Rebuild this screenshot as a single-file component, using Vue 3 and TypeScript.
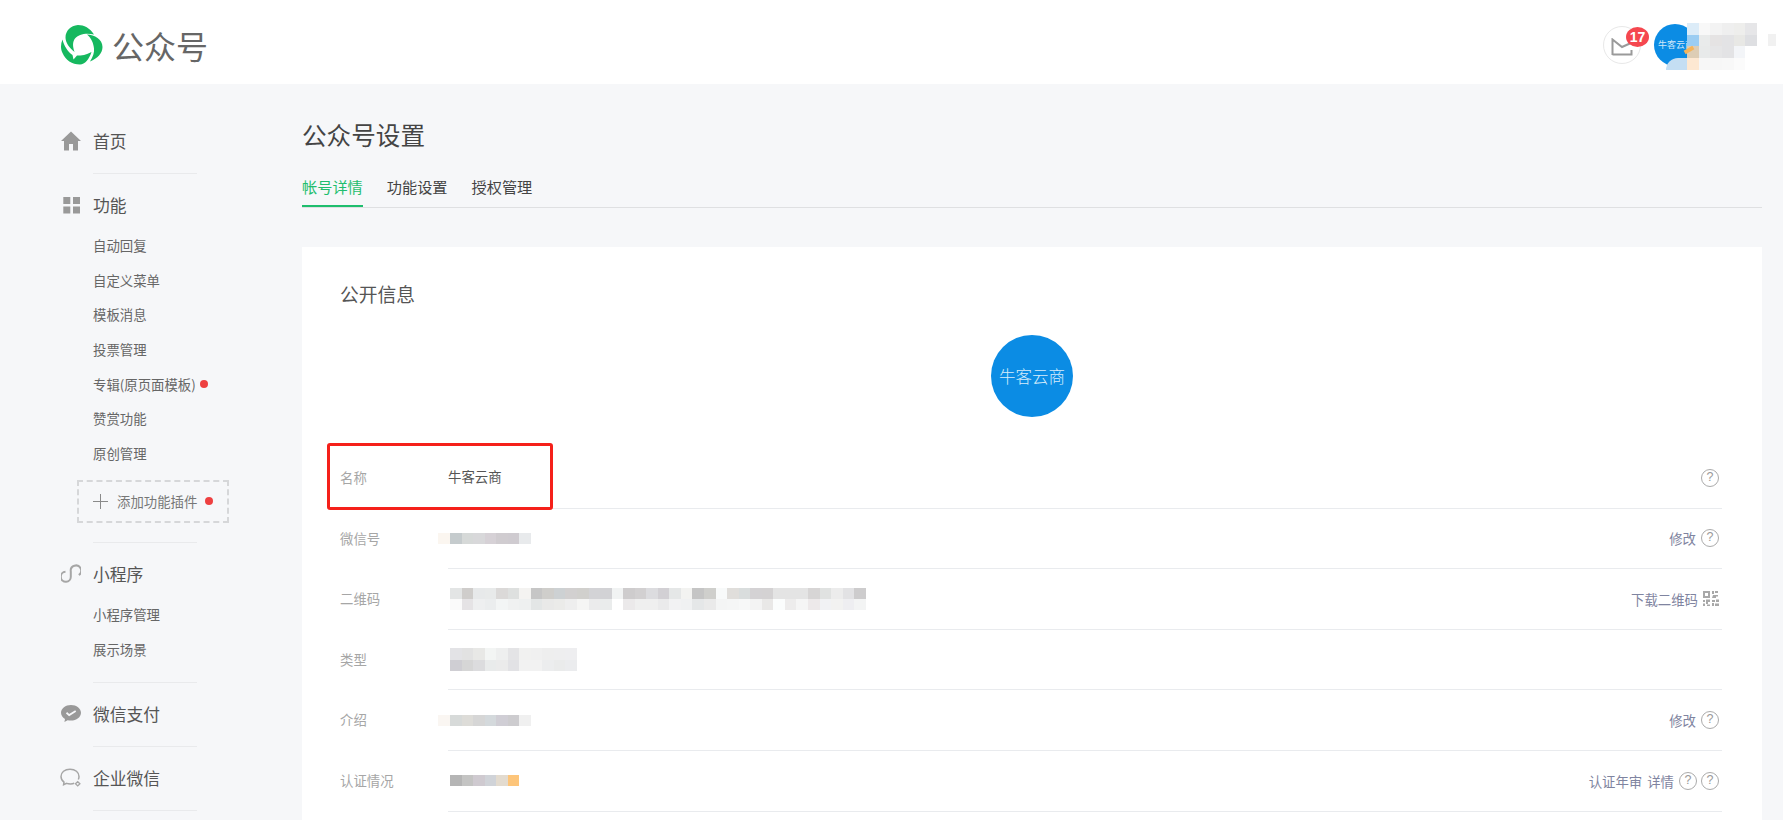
<script setup lang="ts">
interface SubItem { text: string; dot?: boolean }
interface Mosaic { lead?: string; rows: string[][] }
interface Action { text: string }
interface Row {
  label: string
  value?: string
  mosaic?: Mosaic
  actions?: Action[]
  help: number
  qr?: boolean
}

const split = (s: string): string[] => s.split(' ').map((c) => '#' + c)

const featureItems: SubItem[] = [
  { text: '自动回复' },
  { text: '自定义菜单' },
  { text: '模板消息' },
  { text: '投票管理' },
  { text: '专辑(原页面模板)', dot: true },
  { text: '赞赏功能' },
  { text: '原创管理' },
]
const miniItems: SubItem[] = [{ text: '小程序管理' }, { text: '展示场景' }]

const rows: Row[] = [
  { label: '名称', value: '牛客云商', help: 1 },
  {
    label: '微信号',
    mosaic: { lead: '#fbf6f0', rows: [split('c5cbcd d6d9d8 d8d8da d6d1d6 d0ccd0 cfcbd0 e8eaec')] },
    actions: [{ text: '修改' }],
    help: 1,
  },
  {
    label: '二维码',
    mosaic: {
      rows: [
        split('e3e5e5 cfcdcb e7e9ea e8eaea dbd9d8 dee0df f4f3f1 c6c6c6 cfcecb cdd1d3 d2d0d0 d1d0cd d3d3d6 d2d2d5 f1f3f3 cecccd d2d0d1 dcdcdf d2d0d4 e5e7e7 f3f3f1 c5c5c5 cfcfcc f8fafa e0dedb d9dddd d4d2d4 d4d2d3 e4e4e4 e4e4e4 e4e4e4 d7d5d5 e0e2e1 ececec e2e2e4 cdcccd'),
        split('fafafa e5e3e5 eeeff0 ebedee f3f5f5 f0f1f1 eef0f0 e3e6e6 e9e9e8 ebebe9 eeeeee f5f5f4 ebebec eaecec ffffff ebe9ea efefef efefef eaeaeb f2f2f3 f0f1f2 e5e7e8 eaeaea f4f5f5 f5f6f6 f7f8f8 f3f3f3 e9e8e7 fbfdfd edecec f5f5f5 ede9ea f1f2f4 f2f2f1 eeeef1 f3f4f4'),
      ],
    },
    actions: [{ text: '下载二维码' }],
    help: 0,
    qr: true,
  },
  {
    label: '类型',
    mosaic: {
      rows: [
        split('e3e3e6 e2e2e2 e8e8e6 f3f5f4 eeefef e4e4e6 f1f1f0 f0f0f0 eeeeee eeeeef eeeef0'),
        split('cfced3 d6d6d6 dcdcde e9ebeb ebebeb e2e2e5 f2f2f2 f2f2f2 ecedee eaebeb ebecee'),
      ],
    },
    help: 0,
  },
  {
    label: '介绍',
    mosaic: { lead: '#faf6f2', rows: [split('d7dad9 dddcd8 d6d6d6 d4d9dc d0ced5 cdcccf f0f0f0')] },
    actions: [{ text: '修改' }],
    help: 1,
  },
  {
    label: '认证情况',
    mosaic: { rows: [split('b5b5b5 c4c4c3 cfcad0 d0d3d8 e3dbcf fdc57a')] },
    actions: [{ text: '认证年审' }, { text: '详情' }],
    help: 2,
  },
]

const profileMosaic: string[][] = [
  split('ffffff f8f8f8 f3f3f3 efefef eeeeec e6e6e8'),
  split('9bcdf2 e9ebeb e5e3e3 e3e3e5 e8e8e5 dedfe2'),
  split('ddcdb5 e8eaea e6e6e7 e3e3e5 f3f5f8 ffffff'),
  split('fde8d2 f7f7f7 f7f7f7 f8f8f8 fbfbfb ffffff'),
]
</script>

<template>
  <div class="page">
    <header class="topbar">
      <div class="brand">
        <svg class="logo" viewBox="0 0 42 40" width="42" height="40">
          <path fill="#16b85f" d="M33 9.500C29 3 23 0 17 0 9.500.5 4.500 6 4.500 12.500c0 5 3.500 10 9 14.500-2-6-2-10 .5-13.500 3.500-4.500 11.500-6 19-4Z" />
          <path fill="#16b85f" d="M26 9.500C33.500 10 41.500 14 41.500 22c0 6-5 11.500-12.500 14.500 3-5 4.500-9 4-13-.5-5-2.500-10.500-7-14Z" />
          <path fill="#16b85f" d="M1.500 14.500C-.5 19-.5 24 1.500 28 4.500 35 11 39.500 19 39.500c5 0 9-5 11.500-12.500-5 3-10 3.500-14.500 3.500L12.500 34.500l-1-4.500C7 27 3 21 1.500 14.500Z" />
        </svg>
        <span class="brand-name">公众号</span>
      </div>
      <div class="top-right">
        <div class="mail">
          <svg viewBox="0 0 22 18" width="22" height="18" fill="none" stroke="#9a9a9a" stroke-width="2">
            <path d="M1.500 17V1.500L11 9l9-4M1.500 16.500h19V12" />
          </svg>
          <span class="badge">17</span>
        </div>
        <div class="user">
          <div class="user-avatar">牛客云商</div>
          <div class="user-blob"></div>
          <div class="user-mosaic">
            <div v-for="(row, r) in profileMosaic" :key="r" class="um-row">
              <i v-for="(c, k) in row" :key="k" :style="{ background: c }"></i>
            </div>
          </div>
          <i class="user-tip"></i>
          <i class="user-far"></i>
        </div>
      </div>
    </header>

    <div class="shell">
      <aside class="side">
        <a class="nav-main">
          <svg class="nav-ico" viewBox="0 0 20 20" width="20" height="20">
            <path fill="#999" d="M10 .5 0 10h3v9.500h5V13h4v6.500h5V10h3L10 .5Z" />
          </svg>
          首页
        </a>
        <div class="divider"></div>

        <a class="nav-main">
          <svg class="nav-ico" viewBox="0 0 20 20" width="20" height="20">
            <path fill="#999" d="M2.300 2h7v7h-7zM12 2h7v7h-7zM2.300 11.500h7v7h-7zM12 11.500h7v7h-7z" />
          </svg>
          功能
        </a>
        <ul class="subs">
          <li v-for="it in featureItems" :key="it.text">
            {{ it.text }}<i v-if="it.dot" class="dot"></i>
          </li>
        </ul>
        <div class="add-box">
          <svg viewBox="0 0 15 15" width="15" height="15" fill="none" stroke="#8a8a8a" stroke-width="1">
            <path d="M7.500 0v15M0 7.500h15" />
          </svg>
          <span>添加功能插件</span>
          <i class="dot"></i>
        </div>
        <div class="divider divider-add"></div>

        <a class="nav-main">
          <svg class="nav-ico" viewBox="0 0 20 20" width="20" height="20" fill="none" stroke="#a6a6a6" stroke-width="2">
            <path d="M17.800 11A5.200 5.200 0 1 0 9.800 7.500v5A5 5 0 1 1 4.500 7.800" />
          </svg>
          小程序
        </a>
        <ul class="subs">
          <li v-for="it in miniItems" :key="it.text">{{ it.text }}</li>
        </ul>
        <div class="divider divider-mini"></div>

        <a class="nav-main">
          <svg class="nav-ico" viewBox="0 0 20 20" width="20" height="20">
            <path fill="#999" d="M10 1C4.500 1 0 4.400 0 8.800c0 2.600 1.600 4.800 4 6.200l-.6 3 3.200-1.800c1.100.3 2.200.4 3.400.4 5.500 0 10-3.400 10-7.800S15.500 1 10 1Z" />
            <path fill="none" stroke="#f6f7f9" stroke-width="1.800" d="M5.500 8.800l2.700 2.300 6.500-4" />
          </svg>
          微信支付
        </a>
        <div class="divider"></div>

        <a class="nav-main">
          <svg class="nav-ico ico-wide" viewBox="0 0 22 20" width="22" height="20" fill="none" stroke="#a6a6a6" stroke-width="1.500">
            <path d="M18.300 11.500c.5-1 .7-2 .7-3C19 4.300 15.300 1.200 10 1.200S1 4.300 1 8.500c0 2.400 1.200 4.400 3 5.700l-.4 2.500 3-1.300c1.200.4 2.400.5 3.900.5 1.200 0 2.700-.2 3.700-.6" />
            <path stroke-width="1.300" d="M15.500 15.800l2.200-2.100 2.200 2.100-2.200 2.100z" />
          </svg>
          企业微信
        </a>
        <div class="divider"></div>
      </aside>

      <main class="main">
        <h1 class="title">公众号设置</h1>
        <nav class="tabs">
          <a class="tab active">帐号详情</a>
          <a class="tab">功能设置</a>
          <a class="tab">授权管理</a>
        </nav>

        <section class="card">
          <h2 class="card-title">公开信息</h2>
          <div class="avatar">牛客云商</div>
          <div class="rows">
            <div v-for="(row, i) in rows" :key="row.label" class="row">
              <div v-if="i === 0" class="highlight"></div>
              <div class="label">{{ row.label }}</div>
              <div class="body">
                <div class="value">
                  <span v-if="row.value" class="value-text">{{ row.value }}</span>
                  <div v-else-if="row.mosaic" class="mosaic" :class="{ 'has-lead': row.mosaic.lead }">
                    <div v-for="(cells, r) in row.mosaic.rows" :key="r" class="m-row">
                      <i v-if="row.mosaic.lead" :style="{ background: row.mosaic.lead }"></i>
                      <i v-for="(c, k) in cells" :key="k" :style="{ background: c }"></i>
                    </div>
                  </div>
                </div>
                <div class="actions">
                  <a v-for="a in row.actions" :key="a.text" class="action">{{ a.text }}</a>
                  <svg v-if="row.qr" class="qr" viewBox="0 0 16 15" width="16" height="15" fill="#a8a8a8">
                    <path d="M0 0h7v7H0zM2 2v3h3V2zM9 0h2v3H9zM12 0h3v2h-3zM10 4h5v1.500h-2V7H9zM0 9h2v2H0zM3 8.500h4V11H5v2H3zM0 12.500h2V15H0zM4 13.500h3V15H4zM9 9h3v2H9zM13 8.500h3V11h-3zM9 12h2v3H9zM12 12.500h4V15h-4z" />
                  </svg>
                  <span v-for="n in row.help" :key="n" class="help">?</span>
                </div>
              </div>
            </div>
          </div>
        </section>
      </main>
    </div>
  </div>
</template>

<style>
html, body { margin: 0; background: #fff; overflow: hidden; }
</style>

<style scoped>
.page {
  width: 1783px;
  height: 820px;
  overflow: hidden;
  display: flex;
  flex-direction: column;
  font-family: "Noto Sans CJK SC", "Liberation Sans", sans-serif;
  color: #333;
}
.topbar {
  height: 84px;
  flex: none;
  box-sizing: border-box;
  background: #fff;
  display: flex;
  align-items: center;
  justify-content: space-between;
  padding: 6px 0 0 61px;
}
.brand { display: flex; align-items: center; gap: 9px; }
.logo { display: block; }
.brand-name { font-size: 32px; line-height: 40px; color: #666; }
.top-right { display: flex; align-items: center; gap: 13px; width: 180px; }
.mail {
  position: relative;
  width: 38px;
  height: 38px;
  box-sizing: border-box;
  border: 1px solid #e8e8e8;
  border-radius: 50%;
  display: flex;
  align-items: center;
  justify-content: center;
}
.mail svg { margin-top: 4px; }
.badge {
  position: absolute;
  left: 22px;
  top: 0;
  width: 23px;
  height: 20px;
  border-radius: 50%;
  background: #f5474f;
  color: #fff;
  font: 700 14px/20px "Liberation Sans", sans-serif;
  text-align: center;
}
.user { position: relative; width: 129px; height: 42px; }
.user-avatar {
  width: 42px;
  height: 42px;
  border-radius: 50%;
  background: #0b8ce4;
  color: #cfe8fa;
  font-size: 9px;
  line-height: 42px;
  padding-left: 4px;
  box-sizing: border-box;
  white-space: nowrap;
  overflow: hidden;
}
.user-blob {
  position: absolute;
  left: 12px;
  top: 34px;
  width: 21px;
  height: 12px;
  background: #c4def3;
  border-radius: 12px 0 0 0;
}
.user-mosaic { position: absolute; left: 33px; top: -1px; }
.um-row { display: flex; height: 11.7px; }
.um-row i { display: block; width: 11.7px; height: 100%; }
.um-row:first-child i:first-child { background: #dcecf8 !important; }
.user-tip {
  position: absolute;
  left: 30px;
  top: 24px;
  width: 10px;
  height: 4px;
  background: #f5b45a;
  transform: rotate(-30deg);
}
.user-far {
  position: absolute;
  left: 114px;
  top: 10px;
  width: 8px;
  height: 12px;
  background: #f1f1f1;
}

.shell { flex: 1; min-height: 0; display: flex; background: #f6f7f9; }
.side {
  width: 302px;
  flex: none;
  box-sizing: border-box;
  padding: 40px 0 0 61px;
  font-size: 16.800px;
}
.nav-main {
  display: flex;
  align-items: center;
  height: 34px;
  color: #555;
  line-height: 34px;
  position: relative;
  padding-left: 32px;
}
.nav-ico { position: absolute; left: 0; top: 7px; }
.ico-wide { left: -1px; }
.divider {
  width: 104px;
  height: 1px;
  margin: 15px 0 14px 32px;
  background: #e9eaec;
}
.divider-add { margin-top: 19px; }
.divider-mini { margin-top: 16px; }
.subs { list-style: none; margin: 6px 0 0; padding: 0 0 0 32px; font-size: 13.400px; color: #666; }
.subs li { height: 34.700px; line-height: 34.700px; display: flex; align-items: center; }
.dot { display: block; width: 8px; height: 8px; border-radius: 50%; background: #ee4040; margin-left: 4px; }
.add-box {
  width: 152px;
  height: 43px;
  box-sizing: border-box;
  margin: 9px 0 0 16px;
  border: 2px dashed #d6d7d9;
  padding-left: 14px;
  display: flex;
  align-items: center;
  font-size: 13.400px;
  color: #777;
}
.add-box span { margin-left: 9px; }
.add-box .dot { margin-left: 8px; }

.main { width: 1460px; flex: none; padding-top: 32px; display: flex; flex-direction: column; }
.title { margin: 0; font-size: 24.600px; font-weight: 400; line-height: 36px; color: #444; }
.tabs { display: flex; gap: 24px; margin-top: 23px; border-bottom: 1px solid #dfe0e2; height: 32px; }
.tab { font-size: 15.200px; line-height: 22px; height: 32px; box-sizing: border-box; color: #444; }
.active { color: #1fbe6e; border-bottom: 2px solid #1fbe6e; }
.card {
  flex: 1;
  margin-top: 39px;
  background: #fff;
  padding: 35px 40px 0 38px;
}
.card-title { margin: 0; font-size: 18.800px; font-weight: 400; line-height: 24px; color: #555; }
.avatar {
  width: 82px;
  height: 82px;
  margin: 29px auto 31px;
  position: relative;
  left: 1px;
  border-radius: 50%;
  background: #0b8ce4;
  color: #d8edfb;
  font-size: 16.500px;
  font-weight: 300;
  line-height: 82px;
  text-align: center;
  white-space: nowrap;
}
.row { position: relative; display: flex; height: 60.600px; }
.highlight {
  position: absolute;
  left: -13px;
  top: -5px;
  width: 226px;
  height: 67px;
  box-sizing: border-box;
  border: 3px solid #f5201a;
  border-radius: 3px;
  pointer-events: none;
}
.label { width: 108px; flex: none; font-size: 13.400px; line-height: 58px; color: #a6a6a6; }
.body {
  flex: 1;
  display: flex;
  align-items: center;
  justify-content: space-between;
  box-sizing: border-box;
  border-bottom: 1px solid #e9ebee;
  padding-right: 3px;
  font-size: 13.400px;
  color: #555;
}
.value-text { display: block; margin-bottom: 3px; }
.mosaic { margin-left: 2px; }
.mosaic.has-lead { margin-left: -9.550px; }
.m-row { display: flex; height: 11.200px; }
.m-row i { display: block; width: 11.550px; height: 100%; flex: none; }
.actions { display: flex; align-items: center; gap: 4px; }
.action { color: #7f84a0; margin-right: 1px; }
.qr { display: block; margin-left: 0; }
.help {
  display: block;
  width: 18px;
  height: 18px;
  box-sizing: border-box;
  border: 1.500px solid #ababab;
  border-radius: 50%;
  color: #999;
  font: 12.500px/15px "Liberation Sans", sans-serif;
  text-align: center;
}
</style>
